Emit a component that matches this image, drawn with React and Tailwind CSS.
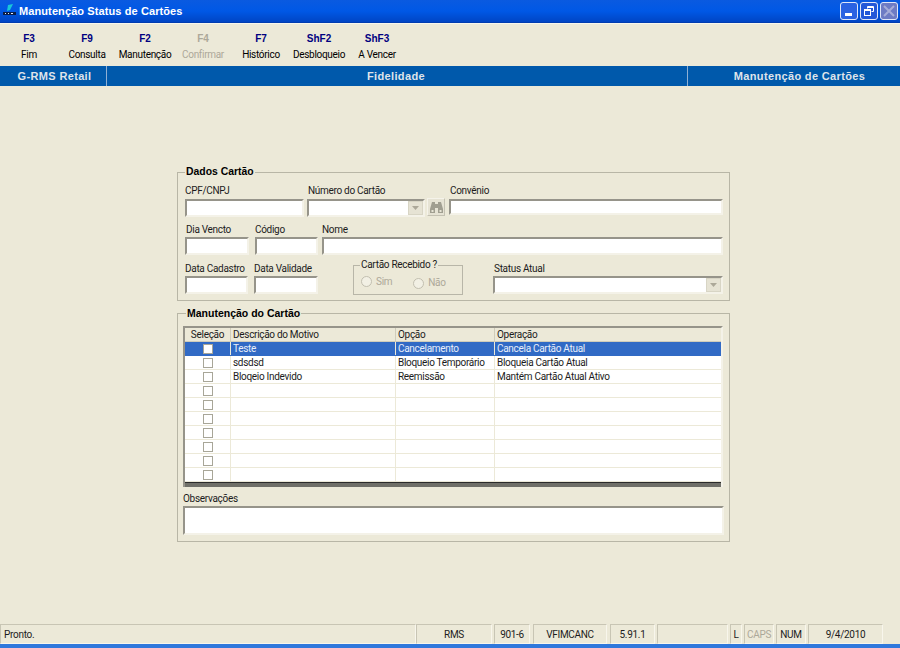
import React from 'react';

const toolbar = [
    { key: 'F3', label: 'Fim' },
    { key: 'F9', label: 'Consulta' },
    { key: 'F2', label: 'Manutenção' },
    { key: 'F4', label: 'Confirmar', disabled: true },
    { key: 'F7', label: 'Histórico' },
    { key: 'ShF2', label: 'Desbloqueio' },
    { key: 'ShF3', label: 'A Vencer' },
];

const rows = [
    { motivo: 'Teste', opcao: 'Cancelamento', operacao: 'Cancela Cartão Atual', selected: true },
    { motivo: 'sdsdsd', opcao: 'Bloqueio Temporário', operacao: 'Bloqueia Cartão Atual' },
    { motivo: 'Bloqeio Indevido', opcao: 'Reemissão', operacao: 'Mantém Cartão Atual Ativo' },
    {}, {}, {}, {}, {}, {}, {},
];

const statusPanels = [
    { text: '901-6', className: 'w-[36px] ml-[2px] justify-center' },
    { text: 'VFIMCANC', className: 'w-[74px] ml-[3px] justify-center' },
    { text: '5.91.1', className: 'w-[45px] ml-[3px] justify-center' },
    { text: '', className: 'w-[71px] ml-[2px]' },
    { text: 'L', className: 'w-[12px] ml-[2px] justify-center' },
    { text: 'CAPS', className: 'w-[30px] ml-[2px] justify-center text-[#aca899]' },
    { text: 'NUM', className: 'w-[30px] ml-[2px] justify-center' },
    { text: '9/4/2010', className: 'w-[75px] ml-[2px] justify-center' },
];

function Sunken({ className = '', children }) {
    return (
        <div className={`bg-white border-2 border-t-[#96948a] border-l-[#96948a] border-r-[#f4f2e8] border-b-[#f4f2e8] ${className}`}>
            {children}
        </div>
    );
}

function ComboArrow() {
    return (
        <div className="ml-auto w-[15px] h-[14px] mt-auto bg-[#e6e3d4] border border-[#d8d5c5] flex items-center justify-center">
            <svg width="7" height="4" viewBox="0 0 7 4"><path d="M0 0h7L3.500 4z" fill="#aca899" /></svg>
        </div>
    );
}

function Field({ label, className = '', boxClass = 'h-[18px] mt-[1px]', labelClass = '', children }) {
    return (
        <div className={className}>
            <div className={`h-[12px] leading-[12px] whitespace-nowrap text-[#1c1c1c] ${labelClass}`}>{label}</div>
            <Sunken className={`flex ${boxClass}`}>{children}</Sunken>
        </div>
    );
}

function Radio({ label, className = '' }) {
    return (
        <div className={`flex items-center gap-[4px] leading-[12px] text-[#aca899] ${className}`}>
            <span className="w-[11px] h-[11px] rounded-full bg-[#f2f0e4] border border-[#c2bfb0]" />
            {label}
        </div>
    );
}

function Binoculars() {
    return (
        <svg width="15" height="13" viewBox="0 0 15 13">
            <path d="M3 1h3v2h3V1h3l2 7v4H9V7H6v5H1V8z" fill="#a09e90" />
            <path d="M2.500 9h2v2h-2zM10.500 9h2v2h-2z" fill="#e8e5d6" />
        </svg>
    );
}

function TitleButton({ className = '', children }) {
    return (
        <div className={`w-[18px] h-[18px] rounded-[3px] border border-[#dfe6f8] flex items-center justify-center ${className}`}>
            {children}
        </div>
    );
}

export default function App() {
    return (
        <div className="w-[900px] h-[648px] flex flex-col bg-[#ece9d8] text-[10px] tracking-[-0.3px] text-black overflow-hidden font-['Roboto','Liberation_Sans',sans-serif]">
            {/* title bar */}
            <div className="h-[23px] flex items-center bg-gradient-to-b from-[#0a5ae0] via-[#0058e6] to-[#0045c4] border-b border-[#003cb0]">
                <svg width="15" height="15" viewBox="0 0 15 15" className="ml-[2px]">
                    <path d="M6 1l5-1-3 6-3 1z" fill="#19c7d8" />
                    <path d="M1 8h13v3H1z" fill="#0b1e48" />
                    <path d="M3 9h1v1H3zM6 9h1v1H6zM9 9h2v1H9z" fill="#e8eefc" />
                </svg>
                <span className="ml-[2px] text-white font-bold text-[11px] tracking-[0.1px] font-['Liberation_Sans',sans-serif]">Manutenção Status de Cartões</span>
                <div className="ml-auto mr-[2px] flex gap-[2px]">
                    <TitleButton className="bg-[#2a62e2]">
                        <span className="w-[7px] h-[3px] bg-white mt-[7px] -ml-[2px]" />
                    </TitleButton>
                    <TitleButton className="bg-[#2258d8]">
                        <svg width="12" height="12" viewBox="0 0 12 12" fill="none" stroke="white">
                            <path d="M4.500 3.500V1.500h6v5h-2" />
                            <rect x="1.500" y="4.500" width="6" height="6" />
                            <path d="M1.500 5.500h6M4.500 2.500h6" />
                        </svg>
                    </TitleButton>
                    <TitleButton className="bg-[#6d7bc4] border-[#8f98d4]">
                        <svg width="12" height="12" viewBox="0 0 12 12" stroke="#a5acd8" strokeWidth="2"><path d="M1 1l10 10M11 1L1 11" /></svg>
                    </TitleButton>
                </div>
            </div>

            {/* toolbar */}
            <div className="h-[43px] flex border-t border-[#f8f6ec]">
                {toolbar.map(b => (
                    <div key={b.key} className={`w-[58px] flex flex-col items-center pt-[9px] ${b.disabled ? 'text-[#aca899]' : ''}`}>
                        <span className={`font-bold text-[10px] tracking-normal leading-[12px] font-['Liberation_Sans',sans-serif] ${b.disabled ? '' : 'text-[#000080]'}`}>{b.key}</span>
                        <span className="mt-[4px] leading-[12px] whitespace-nowrap">{b.label}</span>
                    </div>
                ))}
            </div>

            {/* module bar */}
            <div className="h-[20px] flex bg-[#0059ab] text-[#dfe4ea] font-bold text-[11px] tracking-[0.35px] leading-[20px] text-center font-['Liberation_Sans',sans-serif]">
                <div className="w-[107px] border-r-[1px] border-[#8fb0d4] pl-[3px]">G-RMS Retail</div>
                <div className="w-[581px] border-r-[1px] border-[#8fb0d4] pr-[2px]">Fidelidade</div>
                <div className="flex-1 pl-[11px]">Manutenção de Cartões</div>
            </div>

            <div className="flex-1 pl-[177px] pt-[80px]">
                {/* dados do cartao */}
                <fieldset className="w-[553px] h-[135px] border border-[#b8b6a6] pl-[7px]">
                    <legend className="px-[1px] font-bold text-[10.400px] tracking-normal leading-[12px] font-['Liberation_Sans',sans-serif]">Dados Cartão</legend>
                    <div className="flex mt-[7px]">
                        <Field label="CPF/CNPJ" className="w-[119px]" boxClass="h-[18px] mt-[2px]" />
                        <Field label="Número do Cartão" className="w-[118px] ml-[3px]" labelClass="pl-[1px]" boxClass="h-[18px] mt-[2px]"><ComboArrow /></Field>
                        <div className="w-[18px] h-[18px] ml-[2px] mt-[13px] bg-[#e6e3d4] border border-[#f5f3ea] border-b-[#c4c1b2] border-r-[#c4c1b2] flex items-center justify-center">
                            <Binoculars />
                        </div>
                        <Field label="Convênio" className="w-[274px] ml-[4px]" labelClass="pl-[1px]" boxClass="h-[16px] mt-[2px]" />
                    </div>
                    <div className="flex mt-[7px]">
                        <Field label="Dia Vencto" className="w-[64px]" labelClass="pl-[1px]" />
                        <Field label="Código" className="w-[63px] ml-[6px]" />
                        <Field label="Nome" className="w-[401px] ml-[4px]" />
                    </div>
                    <div className="flex mt-[8px]">
                        <Field label="Data Cadastro" className="w-[63px]" />
                        <Field label="Data Validade" className="w-[64px] ml-[6px]" />
                        <fieldset className="w-[110px] h-[36px] ml-[35px] -mt-[4px] border border-[#b8b6a8] pl-[6px]">
                            <legend className="px-[1px] leading-[12px] whitespace-nowrap text-[#1c1c1c]">Cartão Recebido ?</legend>
                            <div className="flex mt-[3px]">
                                <Radio label="Sim" className="ml-[1px]" />
                                <Radio label="Não" className="ml-[21px] mt-[3px]" />
                            </div>
                        </fieldset>
                        <Field label="Status Atual" className="w-[230px] ml-[30px]" labelClass="pl-[1px]"><ComboArrow /></Field>
                    </div>
                </fieldset>

                {/* manutencao do cartao */}
                <fieldset className="w-[553px] h-[235px] mt-[6px] border border-[#b8b6a6] pl-[5px]">
                    <legend className="ml-[3px] px-[1px] font-bold text-[10.500px] tracking-normal leading-[12px] font-['Liberation_Sans',sans-serif]">Manutenção do Cartão</legend>
                    <div className="w-[540px] mt-[7px] border-2 border-t-[#96948a] border-l-[#96948a] border-r-[#f4f2e8] border-b-0 bg-white">
                        <div className="flex h-[14px] leading-[13px] bg-[#ece9d8] border-b border-[#cfccbb] text-[#1c1c1c]">
                            <div className="w-[46px] text-center border-r border-[#cfccbb]">Seleção</div>
                            <div className="w-[165px] pl-[2px] border-r border-[#cfccbb]">Descrição do Motivo</div>
                            <div className="w-[99px] pl-[2px] border-r border-[#cfccbb]">Opção</div>
                            <div className="flex-1 pl-[2px]">Operação</div>
                        </div>
                        {rows.map((r, i) => (
                            <div key={i} className={`flex h-[14px] leading-[13px] border-b ${r.selected ? 'bg-[#316ac5] text-[#e8eefa] border-[#316ac5]' : 'border-[#ece9d8] text-[#1c1c1c]'}`}>
                                <div className="w-[46px] flex items-center justify-center border-r border-[#ece9d8]">
                                    <span className="w-[10px] h-[10px] bg-white border border-[#a8a698]" />
                                </div>
                                <div className="w-[165px] pl-[2px] border-r border-[#ece9d8]">{r.motivo}</div>
                                <div className="w-[99px] pl-[2px] border-r border-[#ece9d8] whitespace-nowrap">{r.opcao}</div>
                                <div className="flex-1 pl-[2px]">{r.operacao}</div>
                            </div>
                        ))}
                        <div className="h-[5px] bg-[#6f6f68] border-t border-[#2a2a2a]" />
                    </div>
                    <div className="mt-[6px] h-[12px] leading-[12px] text-[#1c1c1c]">Observações</div>
                    <Sunken className="w-[541px] h-[29px] mt-[1px]" />
                </fieldset>
            </div>

            {/* status bar */}
            <div className="h-[20px] flex items-stretch text-[#1c1c1c]">
                <div className="w-[416px] flex items-center pl-[3px] border border-t-[#c8c5b4] border-l-[#c8c5b4] border-r-[#f8f6ec] border-b-[#f8f6ec]">Pronto.</div>
                <div className="w-[76px] flex items-center justify-center border border-t-[#c8c5b4] border-l-[#c8c5b4] border-r-[#f8f6ec] border-b-[#f8f6ec]">RMS</div>
                {statusPanels.map((p, i) => (
                    <div key={i} className={`flex items-center border border-t-[#c8c5b4] border-l-[#c8c5b4] border-r-[#f8f6ec] border-b-[#f8f6ec] ${p.className}`}>{p.text}</div>
                ))}
            </div>
            <div className="h-[4px] bg-[#2f78dc]" />
        </div>
    );
}
